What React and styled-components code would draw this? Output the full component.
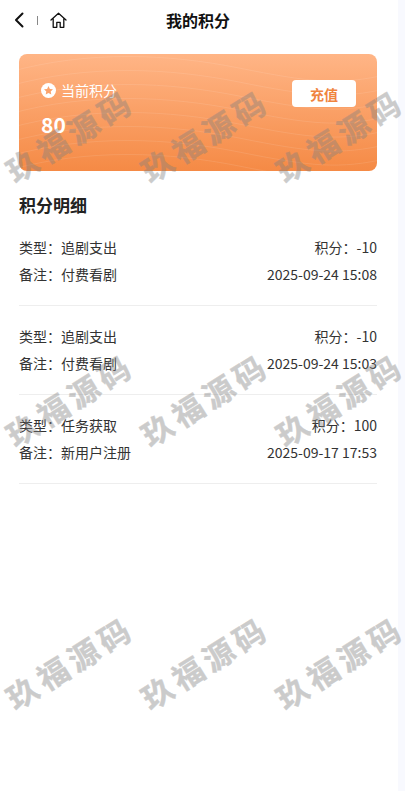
import React from 'react';
import styled, { createGlobalStyle } from 'styled-components';

const GlobalStyle = createGlobalStyle`
  html, body {
    margin: 0;
    padding: 0;
    background: #fff;
  }
  * {
    box-sizing: border-box;
  }
  body {
    font-family: "Noto Sans CJK SC", "Noto Sans", sans-serif;
  }
`;

const Shell = styled.div`
  position: relative;
  display: flex;
  width: 405px;
  height: 791px;
  overflow: hidden;
`;

const Page = styled.main`
  flex: 1;
  min-width: 0;
`;

const ScrollTrack = styled.div`
  width: 7px;
  background: #f8f9fe;
`;

const Header = styled.header`
  position: relative;
  display: flex;
  align-items: center;
  justify-content: center;
  height: 40px;
  padding-right: 2px;
`;

const Title = styled.h1`
  margin: 0;
  font-size: 16px;
  font-weight: 700;
  color: #111;
`;

const HeaderNav = styled.nav`
  position: absolute;
  left: 14px;
  top: 11px;
  display: flex;
  align-items: center;
  height: 18px;
`;

const NavDivider = styled.span`
  width: 1px;
  height: 9px;
  margin: 0 12px 0 13px;
  background: #888;
`;

const Content = styled.div`
  padding: 14px 21px 0 19px;
`;

const PointsCard = styled.section`
  position: relative;
  display: flex;
  align-items: flex-start;
  justify-content: space-between;
  height: 117px;
  padding: 26px 21px 0 22px;
  border-radius: 8px;
  overflow: hidden;
  background: linear-gradient(180deg, #ffb586 0%, #f58a45 100%);
  color: #fff;
`;

const CardWaves = styled.svg`
  position: absolute;
  inset: 0;
  width: 100%;
  height: 100%;
`;

const CardInfo = styled.div`
  position: relative;
`;

const CardLabel = styled.div`
  display: flex;
  align-items: center;
  gap: 5px;
  height: 20px;
  font-size: 14px;
`;

const CardValue = styled.div`
  margin-top: 10px;
  font-size: 21px;
  font-weight: 700;
  line-height: 28px;
`;

const RechargeButton = styled.button`
  position: relative;
  width: 64px;
  height: 27px;
  padding: 0;
  border: 0;
  border-radius: 4px;
  background: #fff;
  color: #f0853f;
  font-family: inherit;
  font-size: 14px;
  font-weight: 700;
`;

const SectionTitle = styled.h2`
  margin: 22px 0 0;
  font-size: 17px;
  line-height: 24px;
  font-weight: 700;
  color: #222;
`;

const List = styled.div``;

const Item = styled.article`
  height: 89px;
  padding-top: 17px;
  border-bottom: 1px solid #eeeeee;
`;

const Row = styled.div`
  display: flex;
  justify-content: space-between;
  height: 27px;
  font-size: 14px;
  line-height: 27px;
  color: #333;
`;

const WatermarkLayer = styled.div`
  position: absolute;
  inset: 0;
  display: grid;
  grid-template-columns: repeat(3, 135px);
  grid-template-rows: repeat(3, 263.67px);
  pointer-events: none;
`;

const Watermark = styled.div`
  display: flex;
  align-items: center;
  justify-content: center;
  white-space: nowrap;
  font-size: 31px;
  font-weight: 700;
  letter-spacing: 5px;
  color: #808080;
  -webkit-text-stroke: 0.4px #808080;
  opacity: 0.4;
  transform: translate(2px, 3px) rotate(-32deg);
`;

const COLON = '\uFF1A';

const records = [
  { type: '追剧支出', points: '-10', note: '付费看剧', time: '2025-09-24 15:08' },
  { type: '追剧支出', points: '-10', note: '付费看剧', time: '2025-09-24 15:03' },
  { type: '任务获取', points: '100', note: '新用户注册', time: '2025-09-17 17:53' },
];

const waves = [10, 24, 38, 52, 66, 80, 94, 108];

function App() {
  return (
    <Shell>
      <GlobalStyle />
      <Page>
        <Header>
          <HeaderNav>
            <svg width="10" height="16" viewBox="0 0 10 16" fill="none">
              <path d="M8.5 1.5 2 8l6.5 6.5" stroke="#111" strokeWidth="2" strokeLinecap="round" strokeLinejoin="round" />
            </svg>
            <NavDivider />
            <svg width="17" height="17" viewBox="0 0 17 17" fill="none">
              <path
                d="M1 8 8.5 1.2 16 8M3.2 7v8.3h3.6v-5h3.4v5h3.6V7"
                stroke="#111"
                strokeWidth="1.3"
                strokeLinecap="round"
                strokeLinejoin="round"
              />
            </svg>
          </HeaderNav>
          <Title>我的积分</Title>
        </Header>
        <Content>
          <PointsCard>
            <CardWaves viewBox="0 0 358 117" preserveAspectRatio="none" fill="none">
              {waves.map((y) => (
                <path
                  key={y}
                  d={`M-10 ${y + 8} C 70 ${y - 14}, 150 ${y - 10}, 220 ${y + 4} S 320 ${y + 22}, 370 ${y + 10}`}
                  stroke="#fff"
                  strokeOpacity="0.1"
                />
              ))}
            </CardWaves>
            <CardInfo>
              <CardLabel>
                <svg width="15" height="15" viewBox="0 0 15 15">
                  <circle cx="7.5" cy="7.5" r="7.5" fill="#fff" />
                  <path
                    d="m7.5 3 1.4 2.9 3.1.4-2.3 2.2.6 3.1-2.8-1.5-2.8 1.5.6-3.1L3 6.3l3.1-.4z"
                    fill="#fba36c"
                  />
                </svg>
                当前积分
              </CardLabel>
              <CardValue>80</CardValue>
            </CardInfo>
            <RechargeButton>充值</RechargeButton>
          </PointsCard>
          <SectionTitle>积分明细</SectionTitle>
          <List>
            {records.map((record) => (
              <Item key={record.time}>
                <Row>
                  <span>{`类型${COLON}${record.type}`}</span>
                  <span>{`积分${COLON}${record.points}`}</span>
                </Row>
                <Row>
                  <span>{`备注${COLON}${record.note}`}</span>
                  <span>{record.time}</span>
                </Row>
              </Item>
            ))}
          </List>
        </Content>
      </Page>
      <ScrollTrack />
      <WatermarkLayer>
        {Array.from({ length: 9 }, (_, i) => (
          <Watermark key={i}>玖福源码</Watermark>
        ))}
      </WatermarkLayer>
    </Shell>
  );
}

export default App;
